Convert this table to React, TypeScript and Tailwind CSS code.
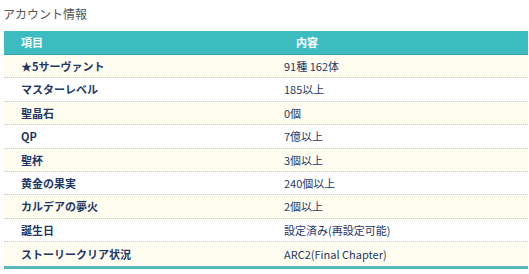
import React from "react";

const rows: [string, string][] = [
  ["★5サーヴァント", "91種 162体"],
  ["マスターレベル", "185以上"],
  ["聖晶石", "0個"],
  ["QP", "7億以上"],
  ["聖杯", "3個以上"],
  ["黄金の果実", "240個以上"],
  ["カルデアの夢火", "2個以上"],
  ["誕生日", "設定済み(再設定可能)"],
  ["ストーリークリア状況", "ARC2(Final Chapter)"],
];

export default function App() {
  return (
    <div
      className="w-[529px] h-[274px] bg-white overflow-hidden"
      style={{ fontFamily: '"Noto Sans CJK JP", "Noto Sans", sans-serif' }}
    >
      <div className="h-[31px] pl-[3px] pt-[6px] text-[12px] leading-[16px] text-[#555555]">
        アカウント情報
      </div>
      <div className="ml-[4px] mr-[1px]">
        <div className="flex h-[24px] items-center bg-[#3dbcbf] border-b border-[#35a9ac] text-white font-bold text-[11px]">
          <div className="w-[270px] pl-[17px]">項目</div>
          <div className="flex-1 pl-[22px]">内容</div>
        </div>
        {rows.map(([k, v], i) => (
          <div
            key={k}
            className={`flex h-[23.4px] items-center text-[11px] text-[#1f3767] ${
              i % 2 === 0 ? "bg-[#fffdf0]" : "bg-white"
            } ${i < rows.length - 1 ? "border-b border-dotted border-[#c8c8c8]" : ""}`}
          >
            <div className="w-[270px] pl-[17px] font-bold">{k}</div>
            <div className="flex-1 pl-[10px]">{v}</div>
          </div>
        ))}
        <div className="h-[3px] bg-[#5ab8bb]" />
      </div>
    </div>
  );
}
